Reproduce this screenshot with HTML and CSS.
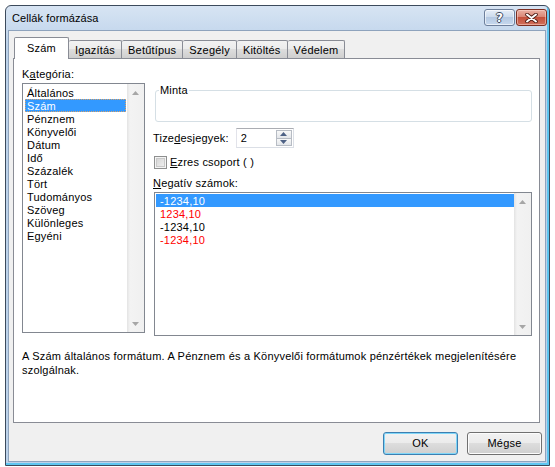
FILE: index.html
```html
<!DOCTYPE html>
<html lang="hu">
<head>
<meta charset="utf-8">
<title>Cellák formázása</title>
<link rel="stylesheet" href="styles.css">
</head>
<body>
<div class="window">
  <div class="titlebar">
    <span class="title">Cellák formázása</span>
    <div class="tbtns">
      <div class="tbtn help"><span class="qmark">?</span></div>
      <div class="tbtn close">
        <svg width="13" height="10" viewBox="0 0 13 10">
          <path d="M2 1.5 L11 8.5 M11 1.5 L2 8.5" stroke="#4a1a12" stroke-width="3.6" stroke-linecap="round"/>
          <path d="M2 1.5 L11 8.5 M11 1.5 L2 8.5" stroke="#ffffff" stroke-width="2" stroke-linecap="round"/>
        </svg>
      </div>
    </div>
  </div>
  <div class="client">
    <div class="tabs">
      <div class="tab sel">Szám</div>
      <div class="tab">Igazítás</div>
      <div class="tab">Betűtípus</div>
      <div class="tab">Szegély</div>
      <div class="tab">Kitöltés</div>
      <div class="tab">Védelem</div>
    </div>
    <div class="panel">
      <div class="cols">
        <div class="left">
          <div class="label">K<u>a</u>tegória:</div>
          <div class="list catlist">
            <div class="items">
              <div class="row">Általános</div>
              <div class="row hl focus">Szám</div>
              <div class="row">Pénznem</div>
              <div class="row">Könyvelői</div>
              <div class="row">Dátum</div>
              <div class="row">Idő</div>
              <div class="row">Százalék</div>
              <div class="row">Tört</div>
              <div class="row">Tudományos</div>
              <div class="row">Szöveg</div>
              <div class="row">Különleges</div>
              <div class="row">Egyéni</div>
            </div>
            <div class="vscroll">
              <div class="arr"><svg width="7" height="4" viewBox="0 0 7 4"><path d="M0 4 L3.5 0 L7 4 Z" fill="#a6a6a6"/></svg></div>
              <div class="arr"><svg width="7" height="4" viewBox="0 0 7 4"><path d="M0 0 L3.5 4 L7 0 Z" fill="#a6a6a6"/></svg></div>
            </div>
          </div>
        </div>
        <div class="right">
          <div class="group">
            <span class="legend">Minta</span>
          </div>
          <div class="spinrow">
            <span class="label">Tize<u>d</u>esjegyek:</span>
            <div class="spin">
              <span class="spinval">2</span>
              <div class="spinbtns">
                <div class="sbtn"><svg width="7" height="4" viewBox="0 0 7 4"><path d="M0 4 L3.5 0 L7 4 Z" fill="#4d6185"/></svg></div>
                <div class="sbtn"><svg width="7" height="4" viewBox="0 0 7 4"><path d="M0 0 L3.5 4 L7 0 Z" fill="#4d6185"/></svg></div>
              </div>
            </div>
          </div>
          <div class="checkrow">
            <span class="checkbox"></span>
            <span class="label"><u>E</u>zres csoport ( )</span>
          </div>
          <div class="label neglabel"><u>N</u>egatív számok:</div>
          <div class="list neglist">
            <div class="items">
              <div class="row hl">-1234,10</div>
              <div class="row red">1234,10</div>
              <div class="row">-1234,10</div>
              <div class="row red">-1234,10</div>
            </div>
            <div class="vscroll">
              <div class="arr"><svg width="7" height="4" viewBox="0 0 7 4"><path d="M0 4 L3.5 0 L7 4 Z" fill="#a6a6a6"/></svg></div>
              <div class="arr"><svg width="7" height="4" viewBox="0 0 7 4"><path d="M0 0 L3.5 4 L7 0 Z" fill="#a6a6a6"/></svg></div>
            </div>
          </div>
        </div>
      </div>
      <p class="desc">A Szám általános formátum. A Pénznem és a Könyvelői formátumok pénzértékek megjelenítésére<br>szolgálnak.</p>
    </div>
    <div class="buttons">
      <div class="btn default">OK</div>
      <div class="btn">Mégse</div>
    </div>
  </div>
</div>
</body>
</html>
```

FILE: styles.css
```css
html, body {
  margin: 0;
  padding: 0;
  background: #ffffff;
}
body {
  font-family: "Liberation Sans", Arial, sans-serif;
  font-size: 11px;
  letter-spacing: 0.2px;
  color: #000;
}
.window {
  margin: 5px 0 0 5px;
  width: 545px;
  height: 461px;
  box-sizing: border-box;
  border: 1px solid #3c4a5c;
  border-radius: 6px 6px 0 0;
  background: linear-gradient(#d7e4f3, #bcd2ea 40px, #bcd2ea);
  box-shadow: inset -2px -2px 0 #5ec6f0;
  display: flex;
  flex-direction: column;
}
.titlebar {
  height: 24px;
  flex: none;
  display: flex;
  align-items: center;
  padding-left: 6px;
}
.title {
  font-size: 11px;
  letter-spacing: 0.1px;
  color: #000;
  flex: 1;
}
.tbtns {
  display: flex;
  align-self: flex-start;
  margin-top: 3px;
  margin-right: 2px;
  gap: 1px;
}
.tbtn {
  width: 31px;
  height: 17px;
  box-sizing: border-box;
  border-radius: 3px;
  display: flex;
  align-items: center;
  justify-content: center;
}
.help {
  border: 1px solid #6d7f9b;
  background: linear-gradient(#e6eef8, #cbdaec 50%, #b5c9e2 50%, #c6d8ee);
  box-shadow: inset 0 0 0 1px rgba(255,255,255,0.6);
}
.qmark {
  font-family: "DejaVu Sans", sans-serif;
  font-weight: bold;
  font-size: 12px;
  line-height: 12px;
  color: #fff;
  text-shadow: 1px 0 0 #3b4a60, -1px 0 0 #3b4a60, 0 1px 0 #3b4a60, 0 -1px 0 #3b4a60;
}
.close {
  border: 1px solid #7d2f22;
  background: linear-gradient(#eab0a3, #d88372 50%, #c4503b 50%, #d0705c);
  box-shadow: inset 0 0 0 1px rgba(255,220,210,0.5);
}
.client {
  flex: 1;
  margin: 0 3px 3px 2px;
  background: #f0f0f0;
  border: 1px solid #8ea3bd;
  display: flex;
  flex-direction: column;
}
.tabs {
  display: flex;
  align-items: flex-end;
  margin-top: 6px;
  padding-left: 5px;
}
.tab {
  height: 18px;
  box-sizing: border-box;
  padding: 0 6px;
  line-height: 18px;
  border: 1px solid #898c95;
  border-bottom: none;
  border-left: none;
  background: linear-gradient(#f2f2f2, #ebebeb 50%, #dddddd 50%, #cfcfcf);
  border-radius: 2px 2px 0 0;
}
.tab.sel {
  height: 22px;
  margin-bottom: -1px;
  padding: 0 12px;
  line-height: 21px;
  background: #fff;
  border-left: 1px solid #898c95;
  position: relative;
  z-index: 1;
}
.panel {
  margin-left: 4px;
  width: 527px;
  height: 365px;
  box-sizing: border-box;
  border: 1px solid #898c95;
  background: #fff;
}
.cols {
  display: flex;
  padding: 9px 0 0 8px;
}
.label {
  line-height: 13px;
  white-space: nowrap;
}
.left {
  width: 123px;
  display: flex;
  flex-direction: column;
}
.left > .label {
  margin-bottom: 2px;
}
.list {
  box-sizing: border-box;
  border: 1px solid #828790;
  display: flex;
  background: #fff;
}
.catlist {
  height: 250px;
}
.items {
  flex: 1;
}
.catlist .items {
  padding: 2px 1px 0 2px;
}
.row {
  height: 13px;
  line-height: 14px;
  padding-left: 2px;
  white-space: nowrap;
}
.row.hl {
  background: #3399ff;
  color: #fff;
}
.row.focus {
  outline: 1px dotted #d9a36b;
  outline-offset: -1px;
}
.row.red {
  color: #ff0000;
}
.vscroll {
  width: 17px;
  flex: none;
  background: linear-gradient(90deg, #e3e3e3, #f3f3f3 3px, #f0f0f0);
  display: flex;
  flex-direction: column;
  justify-content: space-between;
}
.arr {
  height: 17px;
  display: flex;
  align-items: center;
  justify-content: center;
}
.right {
  margin-left: 8px;
  width: 379px;
  display: flex;
  flex-direction: column;
}
.group {
  margin: 22px 0 0 2px;
  height: 32px;
  box-sizing: border-box;
  border: 1px solid #d5dfe5;
  border-radius: 3px;
}
.legend {
  display: block;
  width: max-content;
  margin: -7px 0 0 3px;
  padding: 0 1px;
  line-height: 13px;
  background: #fff;
}
.spinrow {
  margin-top: 6px;
  height: 20px;
  display: flex;
  align-items: center;
  gap: 7px;
}
.spin {
  width: 58px;
  height: 20px;
  box-sizing: border-box;
  border: 1px solid #dbdfe6;
  border-top-color: #abadb3;
  border-left-color: #e2e3ea;
  display: flex;
  align-items: center;
  padding: 1px;
}
.spinval {
  flex: 1;
  padding-left: 3px;
  line-height: 16px;
}
.spinbtns {
  width: 16px;
  height: 16px;
  display: flex;
  flex-direction: column;
}
.sbtn {
  flex: 1;
  box-sizing: border-box;
  border: 1px solid #b7bcc4;
  background: linear-gradient(#f8f8f8, #e3e6ea);
  display: flex;
  align-items: center;
  justify-content: center;
}
.sbtn + .sbtn {
  border-top: none;
}
.checkrow {
  margin-top: 8px;
  height: 13px;
  display: flex;
  align-items: center;
  gap: 3px;
  padding-left: 1px;
}
.checkbox {
  width: 13px;
  height: 13px;
  box-sizing: border-box;
  border: 1px solid #8e8f8f;
  background: linear-gradient(135deg, #d0d0d0, #f4f4f4);
  box-shadow: inset 0 0 0 1px #f4f4f4, inset 0 0 0 2px #c9c9c9;
}
.neglabel {
  margin-top: 8px;
}
.neglist {
  margin: 2px 0 0 1px;
  width: 378px;
  height: 144px;
}
.neglist .items {
  padding: 1px 0 0 1px;
}
.neglist .row {
  padding-left: 4px;
}
.desc {
  margin: 13px 0 0 8px;
  line-height: 14px;
  white-space: nowrap;
}
.buttons {
  display: flex;
  justify-content: flex-end;
  gap: 9px;
  margin-top: 9px;
  padding-right: 3px;
}
.btn {
  width: 75px;
  height: 23px;
  box-sizing: border-box;
  border: 1px solid #707070;
  border-radius: 3px;
  background: linear-gradient(#f2f2f2, #ebebeb 50%, #dddddd 50%, #cfcfcf);
  box-shadow: inset 0 0 0 1px #fcfcfc;
  text-align: center;
  line-height: 21px;
}
.btn.default {
  border-color: #3c7fb1;
  box-shadow: inset 0 0 0 1px #7fd6f8;
}
```
